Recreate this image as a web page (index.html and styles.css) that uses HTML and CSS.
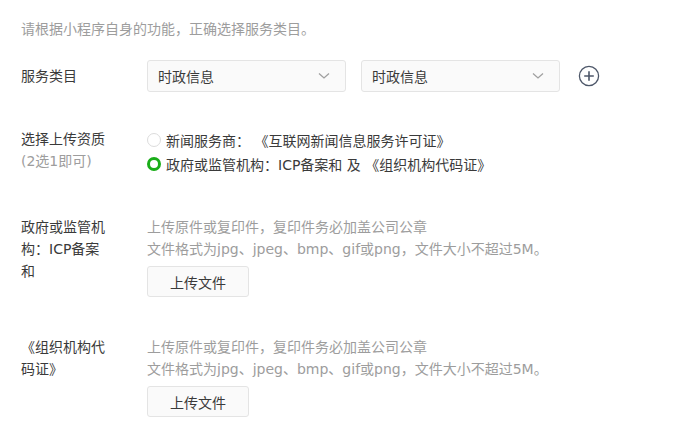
FILE: index.html
```html
<!DOCTYPE html>
<html lang="zh-CN">
<head>
<meta charset="utf-8">
<title>服务类目</title>
<link rel="stylesheet" href="styles.css">
</head>
<body>
<div class="page">
  <p class="intro">请根据小程序自身的功能，正确选择服务类目。</p>

  <div class="row row-category">
    <div class="label">服务类目</div>
    <div class="content selects">
      <div class="select"><span>时政信息</span>
        <svg class="chev" width="12" height="8" viewBox="0 0 12 8"><path d="M1 1.5 L6 6 L11 1.5" fill="none" stroke="#a0a0a0" stroke-width="1.3"/></svg>
      </div>
      <div class="select"><span>时政信息</span>
        <svg class="chev" width="12" height="8" viewBox="0 0 12 8"><path d="M1 1.5 L6 6 L11 1.5" fill="none" stroke="#a0a0a0" stroke-width="1.3"/></svg>
      </div>
      <svg class="plus" width="22" height="22" viewBox="0 0 22 22"><circle cx="11" cy="11" r="9.6" fill="none" stroke="#4d5769" stroke-width="1.3"/><path d="M11 6.2 V15.8 M6.2 11 H15.8" stroke="#4d5769" stroke-width="1.6"/></svg>
    </div>
  </div>

  <div class="row row-qual">
    <div class="label"><div>选择上传资质</div><div class="sub">(2选1即可)</div></div>
    <div class="content radios">
      <div class="radio"><span class="dot"></span>新闻服务商：&nbsp;《互联网新闻信息服务许可证》</div>
      <div class="radio"><span class="dot on"></span>政府或监管机构：ICP备案和 及 《组织机构代码证》</div>
    </div>
  </div>

  <div class="row row-upload">
    <div class="label">政府或监管机构：ICP备案和</div>
    <div class="content">
      <div class="hint">上传原件或复印件，复印件务必加盖公司公章</div>
      <div class="hint">文件格式为jpg、jpeg、bmp、gif或png，文件大小不超过5M。</div>
      <div class="btn">上传文件</div>
    </div>
  </div>

  <div class="row row-upload second">
    <div class="label">《组织机构代码证》</div>
    <div class="content">
      <div class="hint">上传原件或复印件，复印件务必加盖公司公章</div>
      <div class="hint">文件格式为jpg、jpeg、bmp、gif或png，文件大小不超过5M。</div>
      <div class="btn">上传文件</div>
    </div>
  </div>
</div>
</body>
</html>
```

FILE: styles.css
```css
html, body {
  margin: 0;
  padding: 0;
  background: #ffffff;
}
body {
  font-family: "DejaVu Sans", "Noto Sans CJK SC", sans-serif;
  font-size: 14px;
  color: #3a3a3a;
}
.page {
  padding: 18px 0 0 21px;
}
.intro {
  margin: 0;
  line-height: 22px;
  color: #9d9d9d;
}
.row {
  display: flex;
  align-items: flex-start;
}
.label {
  width: 90px;
  margin-right: 36px;
  line-height: 22px;
  flex: none;
}
.content {
  flex: none;
}
.row-category {
  margin-top: 20px;
  align-items: center;
}
.selects {
  display: flex;
  align-items: center;
}
.select {
  height: 30px;
  border: 1px solid #e4e4e4;
  border-radius: 3px;
  background: #fafafa;
  display: flex;
  align-items: center;
  justify-content: space-between;
  padding: 0 15px 0 10px;
  box-sizing: content-box;
  width: 172px;
  margin-right: 15px;
}
.chev {
  display: block;
}
.plus {
  display: block;
  margin-left: 3px;
}
.row-qual {
  margin-top: 36px;
}
.sub {
  color: #9d9d9d;
}
.radios {
  display: flex;
  flex-direction: column;
}
.radio {
  display: flex;
  align-items: center;
  height: 25px;
  margin-top: -1px;
}
.dot {
  width: 14px;
  height: 14px;
  border: 1px solid #dcdcdc;
  border-radius: 50%;
  box-sizing: border-box;
  margin-right: 5px;
  background: #fff;
}
.dot.on {
  border: 3.5px solid #1aad19;
}
.row-upload {
  margin-top: 40px;
}
.row-upload.second {
  margin-top: 39px;
}
.hint {
  line-height: 22px;
  color: #9d9d9d;
}
.btn {
  margin-top: 6px;
  width: 100px;
  height: 29px;
  border: 1px solid #e4e4e4;
  border-radius: 3px;
  background: #fafafa;
  display: flex;
  align-items: center;
  justify-content: center;
  color: #3a3a3a;
}
```
